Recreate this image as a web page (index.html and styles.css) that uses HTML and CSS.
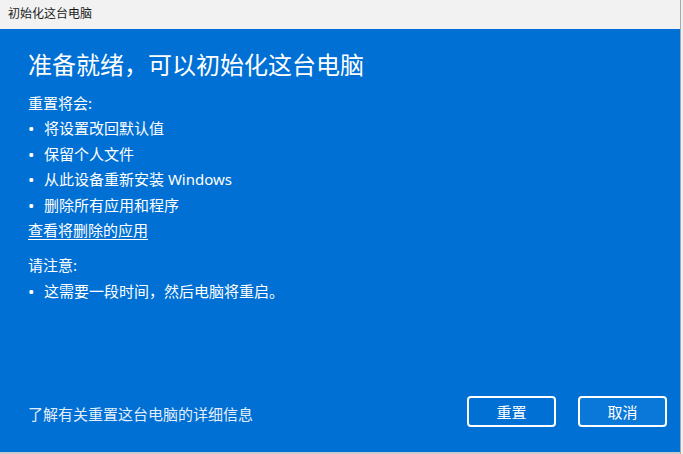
FILE: index.html
```html
<!DOCTYPE html>
<html lang="zh-CN">
<head>
    <meta charset="UTF-8">
    <meta name="viewport" content="width=device-width, initial-scale=1.0">
    <title>初始化这台电脑</title>
    <link rel="stylesheet" href="styles.css">
</head>
<body>
    <div class="window">
        <div class="title-bar">初始化这台电脑</div>

        <div class="dialog">
            <h1>准备就绪，可以初始化这台电脑</h1>

            <p class="label">重置将会:</p>
            <ul class="items">
                <li>将设置改回默认值</li>
                <li>保留个人文件</li>
                <li>从此设备重新安装 Windows</li>
                <li>删除所有应用和程序</li>
            </ul>
            <a class="link" href="#">查看将删除的应用</a>

            <p class="label note">请注意:</p>
            <ul class="items">
                <li>这需要一段时间，然后电脑将重启。</li>
            </ul>

            <div class="footer">
                <a class="more" href="#">了解有关重置这台电脑的详细信息</a>
                <div class="buttons">
                    <button class="btn">重置</button>
                    <button class="btn secondary">取消</button>
                </div>
            </div>
        </div>

        <div class="below"></div>
    </div>
</body>
</html>
```

FILE: styles.css
```css
body {
    margin: 0;
    background-color: #f0f0f0;
    font-family: "Segoe UI", "Noto Sans", "Noto Sans CJK SC", sans-serif;
    overflow: hidden;
}
.window {
    width: 680px;
    height: 454px;
    border-right: 1px solid #a9a9a9;
    display: flex;
    flex-direction: column;
}
.title-bar {
    height: 29px;
    flex: none;
    background-color: #f2f2f2;
    color: #1a1a1a;
    font-size: 12px;
    line-height: 27px;
    padding-left: 8px;
}
.dialog {
    height: 423px;
    flex: none;
    box-sizing: border-box;
    background-color: #0070d4;
    color: white;
    padding: 20px 13px 25px 28px;
    display: flex;
    flex-direction: column;
}
h1 {
    margin: 0 0 10px;
    font-size: 24px;
    font-weight: normal;
    line-height: 32px;
}
.label {
    margin: 0;
    font-size: 15px;
    line-height: 25.4px;
}
.note {
    margin-top: 10px;
}
.items {
    list-style: none;
    margin: 0;
    padding: 0;
}
.items li {
    display: flex;
    font-size: 15px;
    line-height: 25.4px;
}
.items li::before {
    content: "•";
    width: 16px;
    flex: none;
    font-size: 17px;
}
.link {
    align-self: flex-start;
    color: white;
    font-size: 15px;
    line-height: 25.4px;
    text-decoration: underline;
    text-underline-offset: 3px;
}
.footer {
    margin-top: auto;
    display: flex;
    justify-content: space-between;
    align-items: center;
}
.more {
    color: #e3eefa;
    font-size: 15px;
    text-decoration: none;
    padding-top: 3px;
}
.buttons {
    display: flex;
    gap: 22px;
}
.btn {
    width: 89px;
    height: 31px;
    border: 2px solid white;
    border-radius: 4px;
    background-color: #0070d4;
    color: white;
    font-family: inherit;
    font-size: 15px;
    padding: 0;
}
.btn.secondary {
    background-color: #0a78d8;
}
.below {
    height: 2px;
    background-color: #c9c9c9;
}
```
